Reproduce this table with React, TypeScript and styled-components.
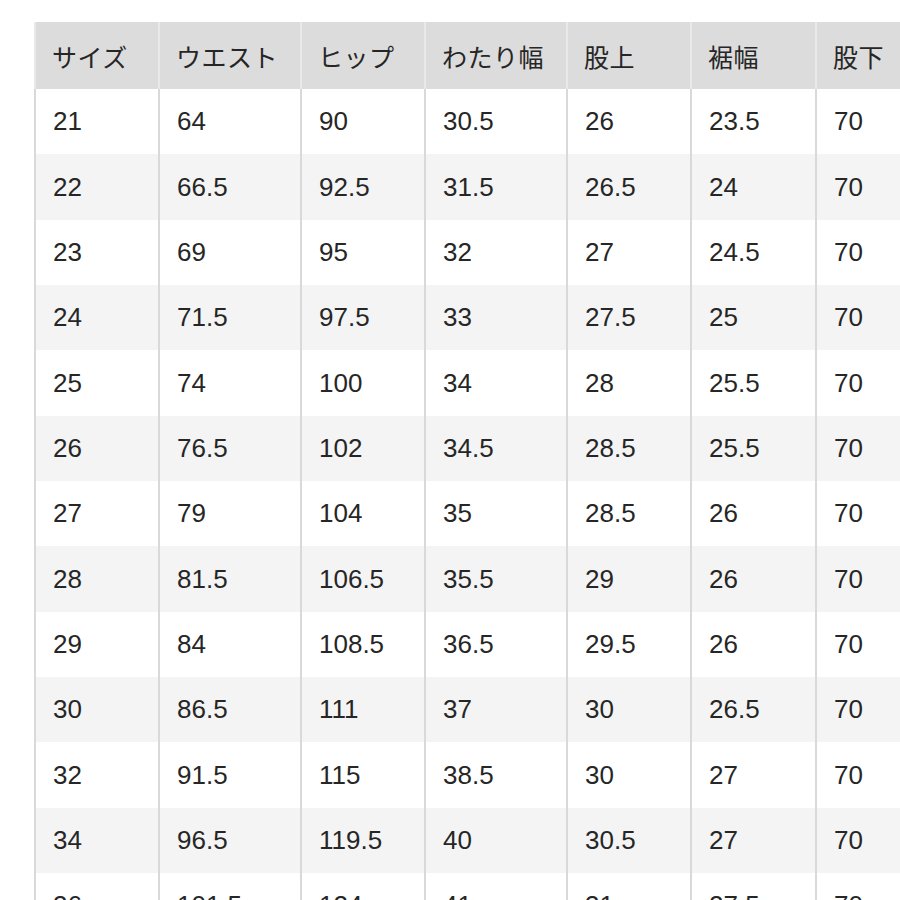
import React from "react";
import styled, { createGlobalStyle } from "styled-components";

const GlobalStyle = createGlobalStyle`
  html, body {
    margin: 0;
    padding: 0;
    background: #ffffff;
    overflow: hidden;
  }
`;

const Page = styled.div`
  padding: 22px 0 0 34px;
  width: 900px;
  height: 900px;
  box-sizing: border-box;
  overflow: hidden;
`;

const Table = styled.table`
  border-collapse: collapse;
  table-layout: fixed;
  width: 948px;
  font-family: "Liberation Sans", "Noto Sans CJK JP", Arial, sans-serif;
  font-size: 26px;
  color: #262626;
`;

const HeadCell = styled.th`
  height: 67px;
  padding: 0 0 0 16px;
  text-align: left;
  font-weight: 400;
  background: #dcdcdc;
  border-left: 2px solid #e9e9e9;
  font-family: "Noto Sans CJK JP", "Liberation Sans", sans-serif;
  font-size: 25px;
  letter-spacing: 0.5px;
  box-sizing: border-box;
`;

const Row = styled.tr<{ $striped: boolean }>`
  background: ${(p) => (p.$striped ? "#f4f4f4" : "#ffffff")};
`;

const Cell = styled.td`
  height: 65.35px;
  padding: 0 0 0 17px;
  border-left: 2px solid #d9d9d9;
  white-space: nowrap;
  box-sizing: border-box;
`;

const widths = [124, 142, 124, 142, 124, 125, 167];

const headers = ["サイズ", "ウエスト", "ヒップ", "わたり幅", "股上", "裾幅", "股下"];

const rows = [
  ["21", "64", "90", "30.5", "26", "23.5", "70"],
  ["22", "66.5", "92.5", "31.5", "26.5", "24", "70"],
  ["23", "69", "95", "32", "27", "24.5", "70"],
  ["24", "71.5", "97.5", "33", "27.5", "25", "70"],
  ["25", "74", "100", "34", "28", "25.5", "70"],
  ["26", "76.5", "102", "34.5", "28.5", "25.5", "70"],
  ["27", "79", "104", "35", "28.5", "26", "70"],
  ["28", "81.5", "106.5", "35.5", "29", "26", "70"],
  ["29", "84", "108.5", "36.5", "29.5", "26", "70"],
  ["30", "86.5", "111", "37", "30", "26.5", "70"],
  ["32", "91.5", "115", "38.5", "30", "27", "70"],
  ["34", "96.5", "119.5", "40", "30.5", "27", "70"],
  ["36", "101.5", "124", "41", "31", "27.5", "70"],
];

export default function App() {
  return (
    <>
      <GlobalStyle />
      <Page>
        <Table>
          <colgroup>
            {widths.map((w, i) => (
              <col key={i} style={{ width: w }} />
            ))}
          </colgroup>
          <thead>
            <tr>
              {headers.map((h) => (
                <HeadCell key={h}>{h}</HeadCell>
              ))}
            </tr>
          </thead>
          <tbody>
            {rows.map((r, i) => (
              <Row key={r[0]} $striped={i % 2 === 1}>
                {r.map((v, j) => (
                  <Cell key={j}>{v}</Cell>
                ))}
              </Row>
            ))}
          </tbody>
        </Table>
      </Page>
    </>
  );
}
